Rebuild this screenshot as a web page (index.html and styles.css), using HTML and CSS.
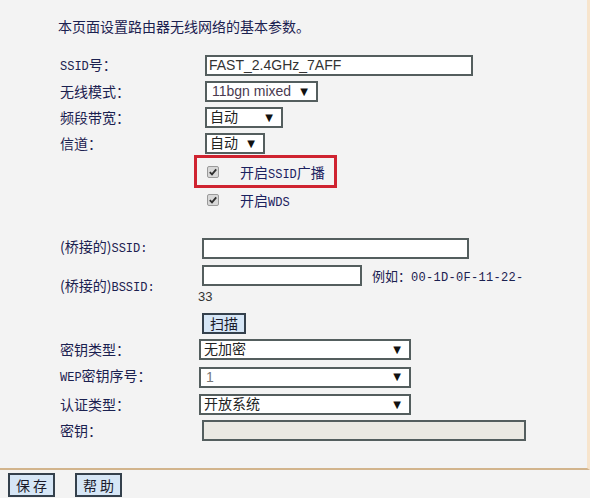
FILE: index.html
```html
<!DOCTYPE html>
<html lang="zh-CN">
<head>
<meta charset="utf-8">
<title>无线网络基本设置</title>
<link rel="stylesheet" href="styles.css">
</head>
<body>
<div class="panel">
  <p class="intro">本页面设置路由器无线网络的基本参数。</p>
  <div class="form">
    <div class="row">
      <span class="lbl"><span class="en">SSID</span>号：</span>
      <div class="inp w268">FAST_2.4GHz_7AFF</div>
    </div>
    <div class="row">
      <span class="lbl">无线模式：</span>
      <div class="sel w113 mode"><span>11bgn mixed</span><span class="arr">▼</span></div>
    </div>
    <div class="row">
      <span class="lbl">频段带宽：</span>
      <div class="sel cjk w78"><span>自动</span><span class="arr">▼</span></div>
    </div>
    <div class="row last">
      <span class="lbl">信道：</span>
      <div class="sel cjk w60"><span>自动</span><span class="arr">▼</span></div>
    </div>

    <div class="redbox">
      <svg class="cb" width="12" height="12" viewBox="0 0 12 12"><rect x="0.5" y="0.5" width="11" height="11" rx="1.5" fill="#d8d8d8" stroke="#9a9a9a"/><path d="M2.8 6.1 L5 8.4 L9.2 3.4" fill="none" stroke="#2e2e2e" stroke-width="1.8"/></svg>
      <span class="cbtxt">开启<span class="en">SSID</span>广播</span>
    </div>
    <div class="cbrow">
      <svg class="cb" width="12" height="12" viewBox="0 0 12 12"><rect x="0.5" y="0.5" width="11" height="11" rx="1.5" fill="#d8d8d8" stroke="#9a9a9a"/><path d="M2.8 6.1 L5 8.4 L9.2 3.4" fill="none" stroke="#2e2e2e" stroke-width="1.8"/></svg>
      <span class="cbtxt">开启<span class="en">WDS</span></span>
    </div>

    <div class="grid">
      <span class="lbl2">(桥接的)<span class="en">SSID:</span></span>
      <div class="cell"><div class="inp w267 ml3"></div></div>

      <span class="lbl2">(桥接的)<span class="en">BSSID:</span></span>
      <div class="cell">
        <div class="line1"><div class="inp w160 ml3"></div><span class="eg">例如：<span class="en">00-1D-0F-11-22-</span></span></div>
        <div class="line2">33</div>
      </div>

      <span class="lbl2"></span>
      <div class="cell"><button class="btn scan">扫描</button></div>

      <span class="lbl2">密钥类型：</span>
      <div class="cell"><div class="sel cjk w212"><span>无加密</span><span class="arr">▼</span></div></div>

      <span class="lbl2"><span class="en">WEP</span>密钥序号：</span>
      <div class="cell"><div class="sel w212 gray"><span>1</span><span class="arr">▼</span></div></div>

      <span class="lbl2">认证类型：</span>
      <div class="cell"><div class="sel cjk w212"><span>开放系统</span><span class="arr">▼</span></div></div>

      <span class="lbl2">密钥：</span>
      <div class="cell"><div class="inp w324 ml3 dis"></div></div>
    </div>
  </div>
</div>
<div class="footer">
  <button class="btn foot">保 存</button>
  <button class="btn foot">帮 助</button>
</div>
</body>
</html>
```
FILE: styles.css
```css
* { box-sizing: border-box; }
html, body { margin: 0; padding: 0; }
body {
  width: 590px;
  height: 498px;
  overflow: hidden;
  background: #f3f3f3;
  font-family: "Noto Sans CJK SC", sans-serif;
  color: #1b2150;
}
.panel {
  height: 470px;
  padding-left: 58px;
  border-right: 3px solid #f7e4cc;
  border-bottom: 2px solid #d2b48c;
}
.intro {
  margin: 0;
  padding-top: 16px;
  height: 36px;
  font-size: 14px;
  line-height: 20px;
}
.form {
  padding-left: 2px;
  margin-top: 19px;
}
.en {
  font-family: "Liberation Mono", monospace;
  font-size: 12px;
}
.row {
  display: flex;
  align-items: center;
  height: 21px;
  margin-bottom: 5px;
}
.row.last { margin-bottom: 1px; }
.lbl {
  width: 145px;
  font-size: 14px;
  line-height: 21px;
}
.inp {
  height: 21px;
  border: 2px solid #545e5e;
  background: #fff;
  font-family: "Liberation Sans", "Noto Sans CJK SC", sans-serif;
  font-size: 14px;
  line-height: 17px;
  color: #333;
  padding-left: 2px;
}
.inp.dis { background: #ebe9e3; }
.sel {
  display: flex;
  align-items: center;
  justify-content: space-between;
  height: 21px;
  border: 2px solid #545e5e;
  background: #fff;
  padding: 0 8px 0 3px;
  font-family: "Liberation Sans", "Noto Sans CJK SC", sans-serif;
  font-size: 14px;
  line-height: 17px;
  color: #222;
}
.sel.cjk {
  font-family: "Noto Sans CJK SC", sans-serif;
  padding-bottom: 3px;
}
.sel.cjk .arr { margin-top: 3px; }
.sel.mode { color: #4a3a50; padding-left: 5px; }
.sel.gray { color: #777; padding-left: 5px; }
.arr {
  font-family: "DejaVu Sans", sans-serif;
  font-size: 10px;
  line-height: 10px;
  color: #111;
}
.w268 { width: 268px; }
.w267 { width: 267px; }
.w160 { width: 160px; }
.w324 { width: 324px; }
.w113 { width: 113px; }
.w78 { width: 78px; }
.w60 { width: 60px; }
.w212 { width: 212px; }
.ml3 { margin-left: 3px; }

.redbox {
  margin-left: 134px;
  width: 143px;
  height: 33px;
  border: 3px solid #cf2330;
  display: flex;
  align-items: center;
  padding-left: 10px;
}
.cb { flex: none; }
.cbtxt {
  margin-left: 21px;
  font-size: 14px;
  color: #1b2160;
}
.cbrow {
  display: flex;
  align-items: center;
  height: 21px;
  margin-top: 1px;
  padding-left: 147px;
}
.grid {
  margin-top: 26px;
  display: grid;
  grid-template-columns: 139px auto;
  row-gap: 5px;
  align-items: center;
}
.lbl2 {
  font-size: 14px;
  line-height: 21px;
}
.cell { display: flex; flex-direction: column; }
.line1 { display: flex; align-items: center; height: 21px; }
.eg {
  margin-left: 10px;
  font-size: 13px;
  color: #1b2150;
}
.eg .en { letter-spacing: 0.3px; }
.line2 {
  height: 22px;
  line-height: 22px;
  font-family: "Liberation Sans", sans-serif;
  font-size: 13px;
  color: #333;
  margin-left: -1px;
}
.btn {
  font-family: "Noto Sans CJK SC", sans-serif;
  font-size: 14px;
  color: #1a1a2a;
  background: #d6e6f6;
  border: 2px solid #34404c;
  padding: 0;
  margin: 0;
}
.scan {
  width: 44px;
  height: 21px;
  line-height: 15px;
  margin-left: 3px;
}
.footer {
  display: flex;
  gap: 20px;
  padding: 3px 0 0 8px;
}
.foot {
  width: 47px;
  height: 24px;
  line-height: 18px;
}
```
